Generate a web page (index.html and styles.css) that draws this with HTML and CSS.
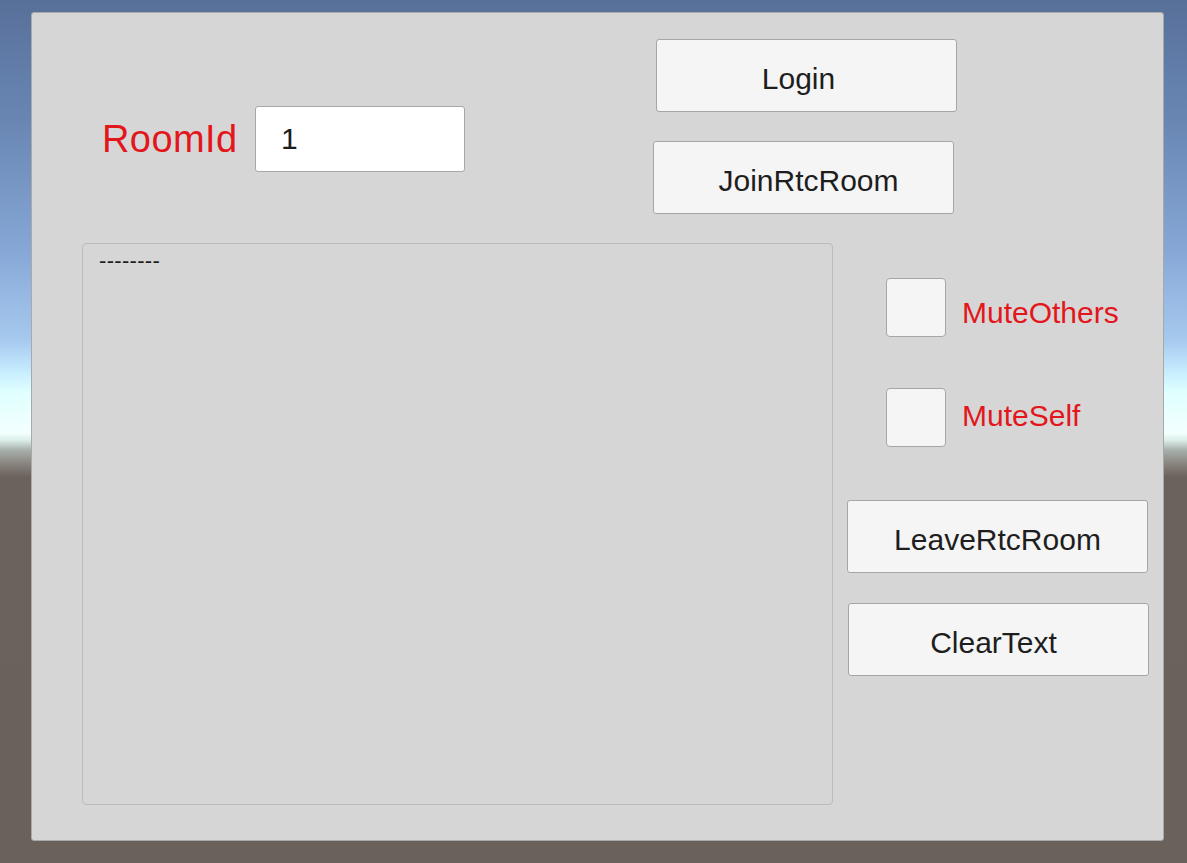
FILE: index.html
```html
<!DOCTYPE html>
<html lang="en">
<head>
<meta charset="utf-8">
<title>RTC Demo</title>
<link rel="stylesheet" href="styles.css">
</head>
<body>
<div class="panel">
  <div class="top">
    <div class="room">
      <span class="room-label">RoomId</span>
      <div class="room-input">1</div>
    </div>
    <div class="auth">
      <div class="btn btn-login">Login</div>
      <div class="btn btn-join">JoinRtcRoom</div>
    </div>
  </div>
  <div class="bottom">
    <div class="log">--------</div>
    <div class="side">
      <div class="check-row row-others">
        <div class="box"></div>
        <span class="check-label label-others">MuteOthers</span>
      </div>
      <div class="check-row row-self">
        <div class="box"></div>
        <span class="check-label label-self">MuteSelf</span>
      </div>
      <div class="btn btn-leave">LeaveRtcRoom</div>
      <div class="btn btn-clear">ClearText</div>
    </div>
  </div>
</div>
</body>
</html>
```

FILE: styles.css
```css
html, body {
  margin: 0;
  padding: 0;
}
body {
  width: 1187px;
  height: 863px;
  overflow: hidden;
  font-family: "Liberation Sans", Arial, sans-serif;
  background: linear-gradient(to bottom,
    #57709a 0px,
    #6986b3 120px,
    #86a7d6 250px,
    #a6c9ee 340px,
    #c8eeff 373px,
    #e0ffff 392px,
    #f3ffff 433px,
    #dcefe9 440px,
    #a8b0ab 450px,
    #8a8680 463px,
    #6b625c 477px,
    #6a615b 863px);
  padding-top: 12px;
  box-sizing: border-box;
}
.panel {
  margin-left: 31px;
  width: 1133px;
  height: 829px;
  box-sizing: border-box;
  background: #d6d6d6;
  border: 1px solid #a9a9a9;
  border-radius: 3px;
  display: flex;
  flex-direction: column;
}
.top {
  display: flex;
  align-items: flex-start;
  height: 230px;
}
.room {
  width: 551px;
  margin-left: 70px;
  margin-top: 93px;
  display: flex;
  align-items: center;
}
.room-label {
  color: #e3161c;
  font-size: 38px;
  letter-spacing: 0.4px;
  width: 153px;
}
.room-input {
  width: 210px;
  height: 66px;
  box-sizing: border-box;
  background: #fff;
  border: 1px solid #a8a8a8;
  border-radius: 3px;
  padding-left: 25px;
  display: flex;
  align-items: center;
  font-size: 30px;
  color: #1c1c1c;
}
.auth {
  display: flex;
  flex-direction: column;
  align-items: flex-start;
  padding-top: 26px;
  gap: 29px;
}
.btn {
  width: 301px;
  height: 73px;
  box-sizing: border-box;
  background: #f5f5f5;
  border: 1px solid #a6a6a6;
  border-radius: 3px;
  display: flex;
  align-items: center;
  justify-content: center;
  padding-top: 7px;
  font-size: 30px;
  color: #1e1e1e;
}
.btn-login {
  margin-left: 3px;
  padding-right: 16px;
}
.btn-join {
  padding-left: 10px;
}
.bottom {
  display: flex;
  align-items: flex-start;
}
.log {
  margin-left: 50px;
  width: 751px;
  height: 562px;
  box-sizing: border-box;
  border: 1px solid #bcbcbc;
  border-radius: 4px;
  padding: 4px 0 0 16px;
  font-size: 22px;
  letter-spacing: 0.3px;
  color: #1e1e1e;
}
.side {
  margin-left: 14px;
  display: flex;
  flex-direction: column;
  align-items: flex-start;
}
.check-row {
  margin-left: 39px;
  display: flex;
  align-items: center;
  gap: 16px;
}
.row-others {
  margin-top: 35px;
}
.row-self {
  margin-top: 51px;
}
.box {
  width: 60px;
  height: 59px;
  box-sizing: border-box;
  background: #f5f5f5;
  border: 1px solid #a6a6a6;
  border-radius: 4px;
}
.check-label {
  color: #e3161c;
  font-size: 30px;
}
.label-others {
  padding-top: 10px;
}
.label-self {
  padding-bottom: 4px;
}
.btn-leave {
  margin-top: 53px;
}
.btn-clear {
  margin-top: 30px;
  margin-left: 1px;
  padding-right: 10px;
}
```
